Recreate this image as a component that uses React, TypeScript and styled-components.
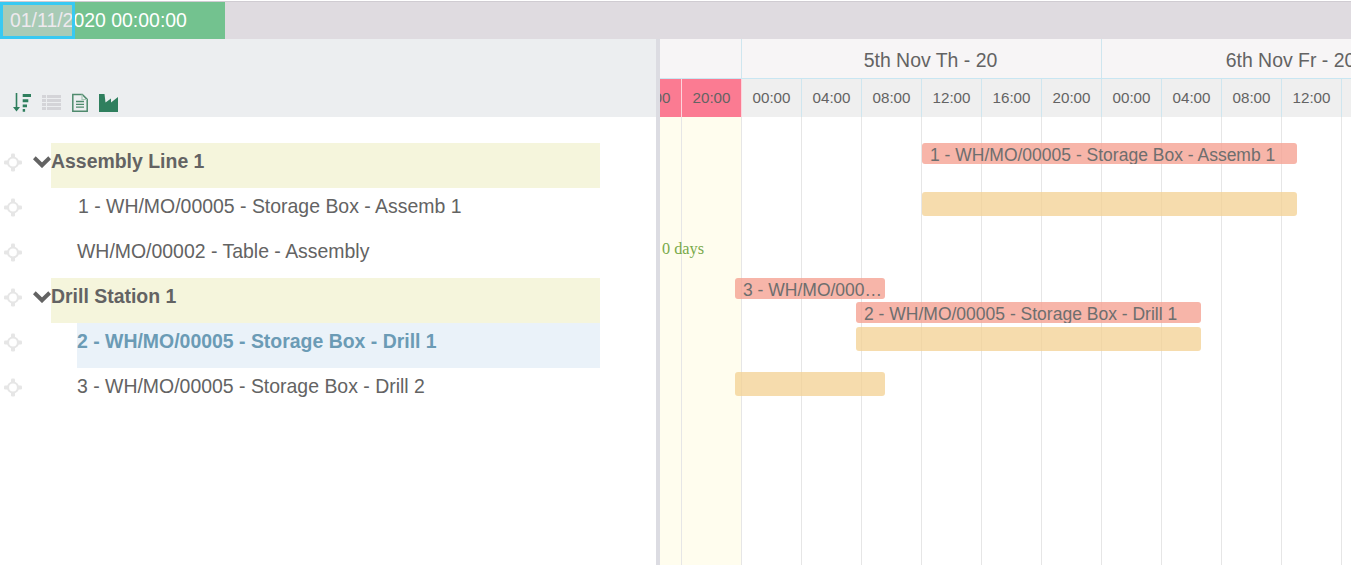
import React from "react";
import styled, { createGlobalStyle } from "styled-components";

const Global = createGlobalStyle`
  html, body { margin: 0; padding: 0; height: 100%; background: #fff; overflow: hidden; }
  body { font-family: "Liberation Sans", Arial, sans-serif; color: #636363; }
  #root { height: 565px; }
`;

const Page = styled.div`
  width: 1351px;
  height: 565px;
  display: flex;
  flex-direction: column;
  overflow: hidden;
`;

const ProgressTrack = styled.div`
  height: 38px;
  margin-top: 1px;
  flex: none;
  background: #dfdbe0;
  border-top: 1px solid #d0ccd2;
  box-sizing: border-box;
`;

const ProgressFill = styled.div`
  position: relative;
  width: 225px;
  height: 37px;
  box-sizing: border-box;
  padding-left: 10px;
  background: #73c28f;
  color: #fff;
  font-size: 19.44px;
  line-height: 37px;
  white-space: nowrap;
`;

const ProgressHandle = styled.div`
  position: absolute;
  left: 0;
  top: 0;
  width: 75px;
  height: 37px;
  box-sizing: border-box;
  border: 3px solid #38c9f2;
  background: rgba(222, 212, 222, 0.5);
`;

const Body = styled.div`
  flex: 1;
  display: flex;
  min-height: 0;
`;

const LeftPanel = styled.div`
  width: 656px;
  flex: none;
  display: flex;
  flex-direction: column;
`;

const Divider = styled.div`
  width: 4px;
  flex: none;
  background: #dcdce2;
`;

const Toolbar = styled.div`
  height: 78px;
  flex: none;
  background: #eceef0;
  display: flex;
  align-items: flex-end;
  gap: 11px;
  padding: 0 0 5px 13px;
  box-sizing: border-box;
`;

const ToolIcon = styled.svg`
  display: block;
  flex: none;
`;

const Tree = styled.div`
  padding: 26px 56px 0 0;
  display: flex;
  flex-direction: column;
`;

const Row = styled.div`
  height: 45px;
  display: flex;
  align-items: center;
`;

const DragCell = styled.span`
  width: 33px;
  flex: none;
  padding: 0 0 7px 4px;
  box-sizing: border-box;
  display: flex;
  align-items: center;
  svg { display: block; }
`;

const Toggle = styled.svg`
  width: 18px;
  height: 12px;
  flex: none;
  margin-bottom: 8px;
`;

const GroupLabel = styled.div`
  flex: 1;
  height: 45px;
  background: #f5f5dc;
  font-size: 19.44px;
  font-weight: 700;
  line-height: 37px;
`;

const TaskLabel = styled.div<{ $active?: boolean; $indent: number }>`
  flex: 1;
  margin-left: ${(p) => p.$indent}px;
  height: 45px;
  font-size: 19.44px;
  line-height: 37px;
  white-space: nowrap;
  font-weight: ${(p) => (p.$active ? 700 : 400)};
  color: ${(p) => (p.$active ? "#6b9bb5" : "#636363")};
  background: ${(p) => (p.$active ? "#eaf2f9" : "transparent")};
`;

const Timeline = styled.div`
  flex: 1;
  min-width: 0;
  display: flex;
  flex-direction: column;
  overflow: hidden;
`;

const DayRow = styled.div`
  height: 39px;
  flex: none;
  display: flex;
  background: #f7f5f6;
  border-bottom: 1px solid #c9e6f2;
  margin-left: -38px;
`;

const DayCell = styled.div<{ $w: number }>`
  width: ${(p) => p.$w}px;
  flex: none;
  box-sizing: border-box;
  padding-left: 18px;
  border-right: 1px solid #cfe6ef;
  font-size: 19.44px;
  line-height: 42px;
  text-align: center;
  white-space: nowrap;
`;

const HourRow = styled.div`
  height: 38px;
  flex: none;
  display: flex;
  margin-left: -38px;
`;

const HourCell = styled.div<{ $hot?: boolean }>`
  width: 60px;
  flex: none;
  box-sizing: border-box;
  border-right: 1px solid ${(p) => (p.$hot ? "#fdd4dc" : "#cfe6ef")};
  background: ${(p) => (p.$hot ? "#fb7b92" : "#efefef")};
  font-size: 15.2px;
  line-height: 37px;
  text-align: center;
`;

const Chart = styled.div`
  position: relative;
  flex: 1;
`;

const Grid = styled.div`
  position: absolute;
  inset: 0 0 0 -38px;
  display: flex;
`;

const GridColumn = styled.div<{ $hot?: boolean }>`
  width: 60px;
  flex: none;
  box-sizing: border-box;
  border-right: 1px solid #e6e6e6;
  background: ${(p) => (p.$hot ? "#fffdee" : "transparent")};
`;

const Bar = styled.div<{ $kind: "task" | "plan"; $x: number; $y: number; $w: number }>`
  position: absolute;
  left: ${(p) => p.$x}px;
  top: ${(p) => p.$y}px;
  width: ${(p) => p.$w}px;
  height: ${(p) => (p.$kind === "task" ? 21 : 24)}px;
  box-sizing: border-box;
  padding: 0 2px 0 8px;
  border-radius: 3px;
  background: ${(p) => (p.$kind === "task" ? "rgba(245, 160, 145, 0.78)" : "rgba(243, 208, 145, 0.75)")};
  font-size: 17.5px;
  line-height: 25px;
  color: #6e6e6e;
  white-space: nowrap;
  overflow: hidden;
  text-overflow: ellipsis;
`;

const DaysNote = styled.div`
  position: absolute;
  left: 2px;
  top: 122px;
  font-family: "Liberation Serif", "Times New Roman", serif;
  font-size: 16.3px;
  line-height: 20px;
  color: #78a94a;
`;

const DragIcon = () => (
  <svg width="18" height="19" viewBox="0 0 18 19" fill="none">
    <circle cx="9" cy="9.5" r="5" stroke="#e6e6e6" strokeWidth="2.2" />
    <g fill="#e6e6e6">
      <rect x="7" y="0.5" width="4" height="4.500" rx="1.300" />
      <rect x="7" y="14" width="4" height="4.500" rx="1.300" />
      <rect x="0" y="7.500" width="4.500" height="4" rx="1.300" />
      <rect x="13.500" y="7.500" width="4.500" height="4" rx="1.300" />
    </g>
  </svg>
);

const SortIcon = () => (
  <ToolIcon width="18" height="19" viewBox="0 0 18 19">
    <path
      d="M2.700 0h1.600v14h2.700L3.500 18.500 0 14h2.700zM9.700 1h8.300v3H9.700zM9.700 6.300h5.600v3H9.700zM9.700 11.500h4.300v2.800H9.700zM9.700 16h2.400v2.800H9.700z"
      fill="#2f7f5e"
    />
  </ToolIcon>
);

const ListIcon = () => (
  <ToolIcon width="19" height="19" viewBox="0 0 19 19">
    <path
      d="M0 2h4v3H0zM5 2h14v3H5zM0 6h4v3H0zM5 6h14v3H5zM0 10h4v3H0zM5 10h14v3H5zM0 14h4v3H0zM5 14h14v3H5z"
      fill="#d4d4d8"
    />
  </ToolIcon>
);

const PageIcon = () => (
  <ToolIcon width="16" height="19" viewBox="0 0 16 19" fill="none">
    <path d="M.8 1.500h9.500l4.900 4.900v11.800H.8z" stroke="#4f8a6d" strokeWidth="1.500" />
    <path d="M10 1.500v5h5" stroke="#a9c8b7" strokeWidth="1.200" />
    <path d="M4 8.500h8M4 11.300h8M4 14.100h8" stroke="#4f8a6d" strokeWidth="1.300" />
  </ToolIcon>
);

const FactoryIcon = () => (
  <ToolIcon width="19" height="19" viewBox="0 0 19 19">
    <path d="M0 1h5.500l1 8.500 5.500-4v4l7-5.500V19H0z" fill="#2f7f5e" />
  </ToolIcon>
);

const hours = ["16:00", "20:00", "00:00", "04:00", "08:00", "12:00", "16:00", "20:00", "00:00", "04:00", "08:00", "12:00", "16:00"];

const rows = [
  { type: "group", text: "Assembly Line 1" },
  { type: "task", text: "1 - WH/MO/00005 - Storage Box - Assemb 1", indent: 45 },
  { type: "task", text: "WH/MO/00002 - Table - Assembly", indent: 44 },
  { type: "group", text: "Drill Station 1" },
  { type: "task", text: "2 - WH/MO/00005 - Storage Box - Drill 1", indent: 44, active: true },
  { type: "task", text: "3 - WH/MO/00005 - Storage Box - Drill 2", indent: 44 },
];

export default function App() {
  return (
    <Page>
      <Global />
      <ProgressTrack>
        <ProgressFill>
          01/11/2020 00:00:00
          <ProgressHandle />
        </ProgressFill>
      </ProgressTrack>
      <Body>
        <LeftPanel>
          <Toolbar>
            <SortIcon />
            <ListIcon />
            <PageIcon />
            <FactoryIcon />
          </Toolbar>
          <Tree>
            {rows.map((r) => (
              <Row key={r.text}>
                <DragCell><DragIcon /></DragCell>
                {r.type === "group" ? (
                  <>
                    <Toggle viewBox="0 0 18 12" fill="none">
                      <path d="M1.300 1.800L9 9.300 16.700 1.800" stroke="#636363" strokeWidth="4" />
                    </Toggle>
                    <GroupLabel>{r.text}</GroupLabel>
                  </>
                ) : (
                  <TaskLabel $indent={r.indent!} $active={r.active}>{r.text}</TaskLabel>
                )}
              </Row>
            ))}
          </Tree>
        </LeftPanel>
        <Divider />
        <Timeline>
          <DayRow>
            <DayCell $w={120} />
            <DayCell $w={360}>5th Nov Th - 20</DayCell>
            <DayCell $w={360}>6th Nov Fr - 20</DayCell>
          </DayRow>
          <HourRow>
            {hours.map((h, i) => (
              <HourCell key={i} $hot={i < 2}>{h}</HourCell>
            ))}
          </HourRow>
          <Chart>
            <Grid>
              {hours.map((_, i) => (
                <GridColumn key={i} $hot={i < 2} />
              ))}
            </Grid>
            <DaysNote>0 days</DaysNote>
            <Bar $kind="task" $x={262} $y={26} $w={375}>1 - WH/MO/00005 - Storage Box - Assemb 1</Bar>
            <Bar $kind="plan" $x={262} $y={75} $w={375} />
            <Bar $kind="task" $x={75} $y={161} $w={150}>3 - WH/MO/00005 - Storage Box - Drill 2</Bar>
            <Bar $kind="task" $x={196} $y={185} $w={345}>2 - WH/MO/00005 - Storage Box - Drill 1</Bar>
            <Bar $kind="plan" $x={196} $y={210} $w={345} />
            <Bar $kind="plan" $x={75} $y={255} $w={150} />
          </Chart>
        </Timeline>
      </Body>
    </Page>
  );
}
